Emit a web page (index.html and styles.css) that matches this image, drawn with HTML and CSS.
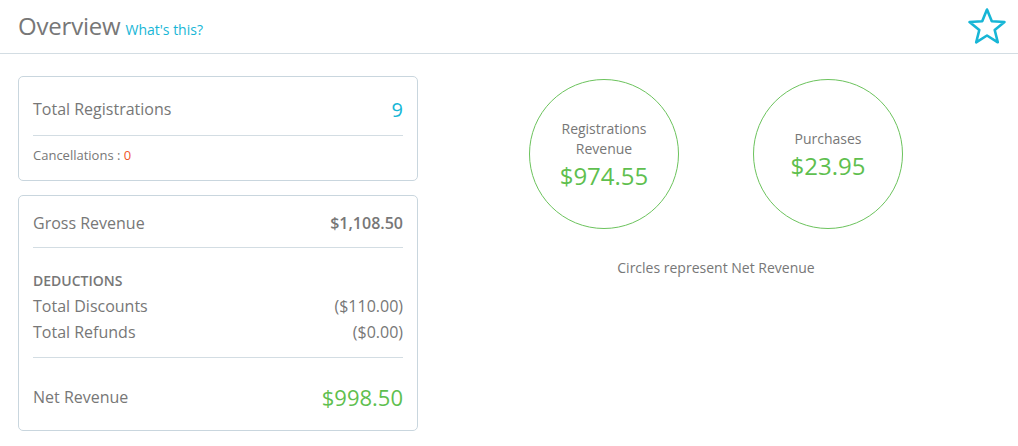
FILE: index.html
```html
<!DOCTYPE html>
<html>
<head>
    <title>Overview</title>
    <link rel="stylesheet" href="styles.css">
</head>
<body>

    <!-- Page header -->
    <div class="page-header">
        <h1>Overview</h1>
        <a href="#" class="help-link">What's this?</a>
        <span class="spacer"></span>
        <svg class="star-icon" width="40" height="38" viewBox="0 0 40 38">
            <polygon points="20,2.5 24.8,14.2 37.5,15 27.7,23 30.8,35.3 20,28.5 9.2,35.3 12.3,23 2.5,15 15.2,14.2"
                     fill="none" stroke="#17b6d6" stroke-width="2.6" stroke-linejoin="round"/>
        </svg>
    </div>

    <div class="overview">
        <div class="left-col">
            <div class="panel">
                <div class="row row-main">
                    <span>Total Registrations</span>
                    <span class="value-count">9</span>
                </div>
                <div class="divider"></div>
                <div class="row-small">Cancellations : <span class="cancel-count">0</span></div>
            </div>

            <div class="panel panel-revenue">
                <div class="row row-gross">
                    <span>Gross Revenue</span>
                    <span class="value-bold">$1,108.50</span>
                </div>
                <div class="divider"></div>
                <div class="deductions">
                    <div class="deductions-title">DEDUCTIONS</div>
                    <div class="row row-line">
                        <span>Total Discounts</span>
                        <span>($110.00)</span>
                    </div>
                    <div class="row row-line">
                        <span>Total Refunds</span>
                        <span>($0.00)</span>
                    </div>
                </div>
                <div class="divider"></div>
                <div class="row row-net">
                    <span>Net Revenue</span>
                    <span class="value-net">$998.50</span>
                </div>
            </div>
        </div>

        <div class="right-col">
            <div class="circles">
                <div class="circle">
                    <div class="circle-label">Registrations<br>Revenue</div>
                    <div class="circle-value">$974.55</div>
                </div>
                <div class="circle">
                    <div class="circle-label">Purchases</div>
                    <div class="circle-value">$23.95</div>
                </div>
            </div>
            <p class="circles-note">Circles represent Net Revenue</p>
        </div>
    </div>

</body>
</html>
```

FILE: styles.css
```css
body {
    font-family: "Open Sans", sans-serif;
    margin: 0;
    padding: 0;
    background-color: #fff;
    color: #777;
}

.page-header {
    display: flex;
    align-items: center;
    height: 54px;
    padding: 0 11px 0 18px;
    border-bottom: 1px solid #d3dde3;
    box-sizing: border-box;
}

.page-header h1 {
    margin: 0;
    font-size: 24px;
    font-weight: normal;
    color: #777;
    letter-spacing: -0.2px;
    padding-bottom: 2px;
}

.help-link {
    color: #17b6d6;
    font-size: 14px;
    text-decoration: none;
    margin-left: 5px;
    padding-top: 6px;
}

.spacer {
    flex: 1;
}

.star-icon {
    display: block;
    margin-top: -2px;
}

.overview {
    display: flex;
    padding: 22px 4px 0 18px;
}

.left-col {
    width: 400px;
    display: flex;
    flex-direction: column;
    gap: 14px;
}

.panel {
    border: 1px solid #c9d6de;
    border-radius: 5px;
    padding: 0 14px;
}

.row {
    display: flex;
    justify-content: space-between;
    align-items: center;
}

.row-main {
    height: 58px;
    font-size: 16px;
    padding-top: 6px;
    box-sizing: border-box;
}

.value-count {
    color: #17b6d6;
    font-size: 20px;
}

.divider {
    height: 1px;
    background-color: #d3dde3;
}

.row-small {
    font-size: 13px;
    line-height: 18px;
    padding: 10px 0 16px;
}

.cancel-count {
    color: #f0572a;
}

.row-gross {
    height: 51px;
    font-size: 16px;
    padding-top: 2px;
    box-sizing: border-box;
}

.value-bold {
    font-weight: 600;
    font-size: 16px;
}

.deductions {
    padding: 23px 0 12px;
}

.deductions-title {
    font-size: 14px;
    font-weight: 600;
    line-height: 20px;
    margin-bottom: 2px;
}

.row-line {
    font-size: 16px;
    line-height: 26px;
}

.row-net {
    height: 72px;
    font-size: 16px;
    padding-top: 6px;
    box-sizing: border-box;
}

.value-net {
    color: #5fbf4f;
    font-size: 22px;
}

.right-col {
    flex: 1;
    display: flex;
    flex-direction: column;
    align-items: center;
}

.circles {
    display: flex;
    gap: 74px;
    margin-top: 3px;
}

.circle {
    width: 150px;
    height: 150px;
    box-sizing: border-box;
    border: 1px solid #6cc35d;
    border-radius: 50%;
    padding-top: 3px;
    display: flex;
    flex-direction: column;
    justify-content: center;
    align-items: center;
    text-align: center;
}

.circle-label {
    font-size: 14px;
    line-height: 20px;
}

.circle-value {
    color: #5fbf4f;
    font-size: 24px;
    line-height: 34px;
}

.circles-note {
    font-size: 14px;
    margin: 29px 0 0;
}
```
